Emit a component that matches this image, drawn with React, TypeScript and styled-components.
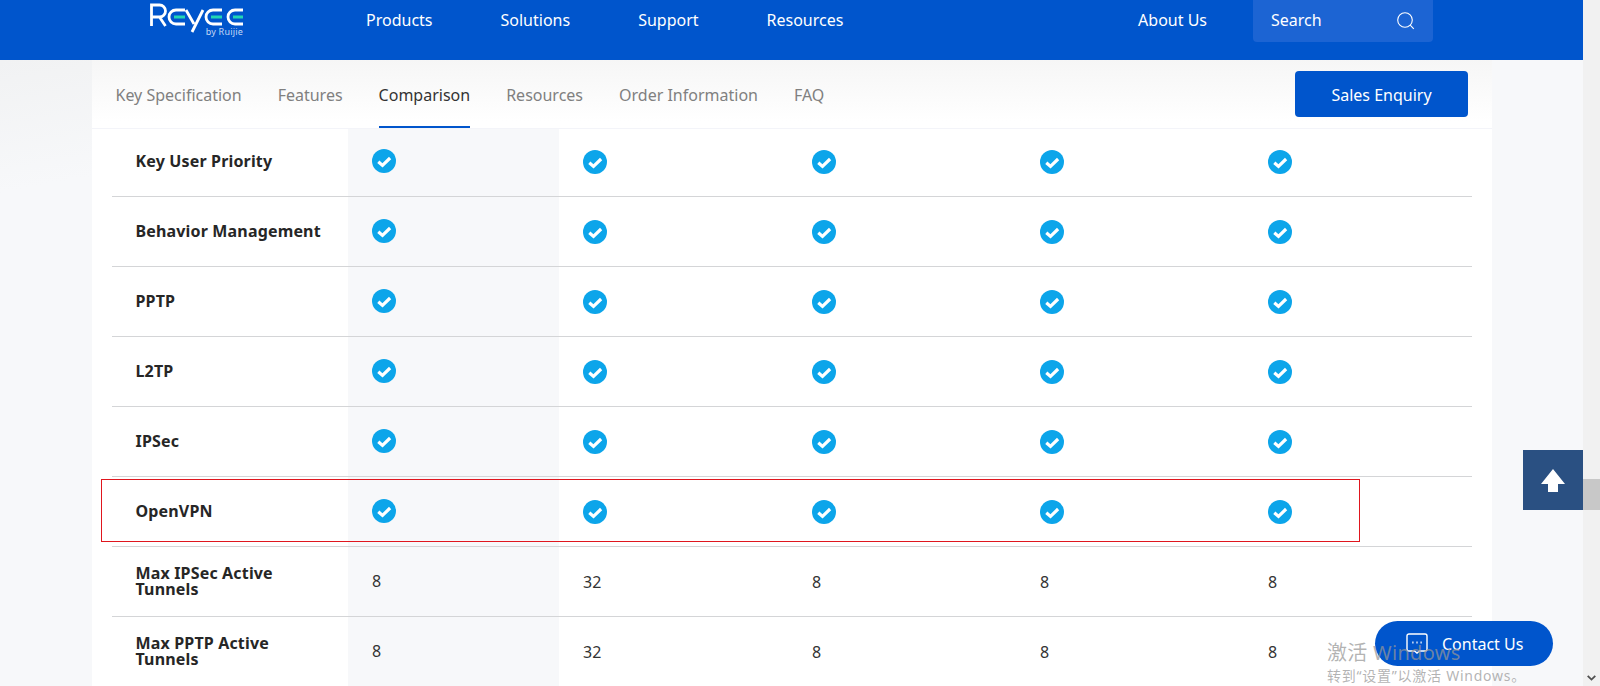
import React from 'react';
import styled, { createGlobalStyle } from 'styled-components';

const BLUE = '#0055cc';

const GlobalStyle = createGlobalStyle`
  html, body {
    margin: 0;
    padding: 0;
    height: 100%;
    overflow: hidden;
  }
  body {
    font-family: 'Noto Sans', 'Open Sans', sans-serif;
    color: #333;
  }
`;

const navItems = ['Products', 'Solutions', 'Support', 'Resources'];
const tabs = ['Key Specification', 'Features', 'Comparison', 'Resources', 'Order Information', 'FAQ'];

type Row = { label: string; values?: string[] };

const rows: Row[] = [
  { label: 'Key User Priority' },
  { label: 'Behavior Management' },
  { label: 'PPTP' },
  { label: 'L2TP' },
  { label: 'IPSec' },
  { label: 'OpenVPN' },
  { label: 'Max IPSec Active Tunnels', values: ['8', '32', '8', '8', '8'] },
  { label: 'Max PPTP Active Tunnels', values: ['8', '32', '8', '8', '8'] },
];

const CheckIcon = () => (
  <svg width="24" height="24" viewBox="0 0 24 24">
    <circle cx="12" cy="12" r="12" fill="#0ca5ea" />
    <path d="M6.300 12.700l4.200 3.700 7.600-7.400" fill="none" stroke="#fff" strokeWidth="3.200" />
  </svg>
);

const Logo = () => (
  <svg width="94" height="40" viewBox="0 0 94 40" role="img" aria-label="Reyee by Ruijie">
    <g fill="none" stroke="#fff" strokeWidth="2.800">
      <path d="M1.500 24V3H9.500a6 6 0 0 1 0 12H1.500M9.500 15l6 9" />
      <path d="M35 8H26a7 7 0 0 0 0 14h9" />
      <path d="M36 8l8 14M53 8L42 30" />
      <path d="M72 8H63a7 7 0 0 0 0 14h9" />
      <path d="M93 8H85a7 7 0 0 0 0 14h8" />
    </g>
    <g stroke="#22d6b4" strokeWidth="2.800">
      <path d="M24 15h11M61 15h11M83 15h10" />
    </g>
    <LogoSub x="93" y="33" textAnchor="end">by Ruijie</LogoSub>
  </svg>
);

const SearchIcon = () => (
  <svg width="18" height="18" viewBox="0 0 18 18" fill="none" stroke="#fff" strokeWidth="1.100">
    <circle cx="8" cy="8" r="7.300" />
    <path d="M13.200 13.200l3.600 3.600" />
  </svg>
);

const ArrowUp = () => (
  <svg width="24" height="23" viewBox="0 0 24 23">
    <polygon points="12,0 24,15 17,15 17,23 7,23 7,15 0,15" fill="#fff" />
  </svg>
);

const ChatIcon = () => (
  <svg width="22" height="21" viewBox="0 0 22 21" fill="none" stroke="#fff" strokeWidth="1.400">
    <path d="M3 1h16a2 2 0 0 1 2 2v13a2 2 0 0 1-2 2h-5.500l-2.500 2-2.500-2H3a2 2 0 0 1-2-2V3a2 2 0 0 1 2-2z" />
    <path d="M6.300 9.500h1.200M10.400 9.500h1.200M14.500 9.500h1.200" strokeWidth="1.800" />
  </svg>
);

const Chevron = () => (
  <svg width="9" height="6" viewBox="0 0 9 6" fill="none" stroke="#505050" strokeWidth="1.800">
    <path d="M.7.800l3.800 3.800L8.300.8" />
  </svg>
);

export default function App() {
  return (
    <Page>
      <GlobalStyle />
      <Main>
        <Header>
          <LogoSlot>
            <Logo />
          </LogoSlot>
          <Nav>
            {navItems.map((item) => (
              <NavLink key={item}>{item}</NavLink>
            ))}
          </Nav>
          <AboutLink>About Us</AboutLink>
          <SearchBox>
            <SearchLabel>Search</SearchLabel>
            <SearchIcon />
          </SearchBox>
        </Header>
        <Panel>
          <TabBar>
            <TabList>
              {tabs.map((t) => (
                <Tab key={t} $active={t === 'Comparison'}>
                  {t}
                </Tab>
              ))}
            </TabList>
            <SalesButton>Sales Enquiry</SalesButton>
          </TabBar>
          <Table>
            {rows.map((row, i) => (
              <TableRow key={row.label} $first={i === 0}>
                <LabelCell>{row.label}</LabelCell>
                {[0, 1, 2, 3, 4].map((c) => (
                  <ValueCell key={c} $shaded={c === 0}>
                    {row.values ? <ValueText>{row.values[c]}</ValueText> : <CheckIcon />}
                  </ValueCell>
                ))}
              </TableRow>
            ))}
            <Annotation />
          </Table>
        </Panel>
      </Main>
      <ScrollTrack>
        <ScrollThumb />
        <ScrollArrow>
          <Chevron />
        </ScrollArrow>
      </ScrollTrack>
      <BackToTop>
        <ArrowUp />
      </BackToTop>
      <ContactButton>
        <ChatIcon />
        <span>Contact Us</span>
      </ContactButton>
      <Watermark>
        <WatermarkTitle>激活 Windows</WatermarkTitle>
        <WatermarkSub>转到“设置”以激活 Windows。</WatermarkSub>
      </Watermark>
    </Page>
  );
}

const Page = styled.div`
  position: relative;
  display: flex;
  width: 1600px;
  height: 686px;
  overflow: hidden;
`;

const Main = styled.div`
  display: flex;
  flex-direction: column;
  width: 1583px;
  height: 686px;
  background: linear-gradient(170deg, #f1f2f3 60px, #f7f8fa 190px);
`;

const Header = styled.header`
  display: flex;
  align-items: flex-start;
  flex-shrink: 0;
  height: 60px;
  padding: 0 150px;
  background: ${BLUE};
  color: #fff;
  font-size: 16px;
`;

const LogoSlot = styled.div`
  width: 216px;
  padding-top: 2px;
`;

const LogoSub = styled.text`
  font-family: 'Noto Sans', sans-serif;
  font-size: 9px;
  letter-spacing: 0.2px;
  fill: #c3d7f5;
`;

const Nav = styled.nav`
  display: flex;
  gap: 68px;
`;

const NavLink = styled.a`
  line-height: 41px;
`;

const AboutLink = styled.a`
  margin-left: auto;
  margin-right: 46px;
  line-height: 41px;
`;

const SearchBox = styled.div`
  display: flex;
  align-items: center;
  justify-content: space-between;
  box-sizing: border-box;
  width: 180px;
  height: 42px;
  padding: 0 18px;
  border-radius: 0 0 4px 4px;
  background: #1c64d3;
`;

const SearchLabel = styled.span`
  margin-bottom: 2px;
`;

const Panel = styled.main`
  display: flex;
  flex-direction: column;
  flex: 1;
  width: 1400px;
  margin: 0 auto;
  background: #fff;
`;

const TabBar = styled.div`
  display: flex;
  justify-content: space-between;
  box-sizing: border-box;
  flex-shrink: 0;
  height: 69px;
  padding: 11px 24px 0;
  border-bottom: 1px solid #f3f4f9;
  background: linear-gradient(180deg, #f6f6f6 0%, #fff 90%);
`;

const TabList = styled.div`
  display: flex;
  gap: 36px;
`;

const Tab = styled.a<{ $active?: boolean }>`
  box-sizing: border-box;
  height: 57px;
  padding-top: 12px;
  border-bottom: 2px solid ${({ $active }) => ($active ? BLUE : 'transparent')};
  color: ${({ $active }) => ($active ? '#333' : '#808080')};
  font-size: 16px;
  line-height: 24px;
`;

const SalesButton = styled.button`
  width: 173px;
  height: 46px;
  padding: 2px 0 0 1px;
  border: 0;
  border-radius: 4px;
  background: ${BLUE};
  color: #fff;
  font-family: inherit;
  font-size: 16px;
`;

const Table = styled.div`
  position: relative;
  flex: 1;
  padding: 0 20px;
  overflow: hidden;
`;

const TableRow = styled.div<{ $first?: boolean }>`
  display: grid;
  grid-template-columns: 236px 211px 229px 228px 228px 1fr;
  box-sizing: border-box;
  height: ${({ $first }) => ($first ? 69 : 70)}px;
  margin-top: ${({ $first }) => ($first ? -1 : 0)}px;
  border-bottom: 1px solid #d4d5d7;
`;

const LabelCell = styled.div`
  display: flex;
  align-items: center;
  padding: 0 24px 2px;
  color: #262626;
  font-size: 16px;
  font-weight: 700;
  letter-spacing: 0.16px;
  line-height: 16px;
`;

const ValueCell = styled.div<{ $shaded?: boolean }>`
  display: flex;
  align-items: center;
  padding: ${({ $shaded }) => ($shaded ? '0 24px 2px' : '0 24px')};
  background: ${({ $shaded }) => ($shaded ? '#f7f8fa' : 'transparent')};
  color: #333;
  font-size: 16px;
`;

const ValueText = styled.span`
  margin-left: 0.5px;
`;

const Annotation = styled.div`
  position: absolute;
  left: 9px;
  top: 350px;
  width: 1259px;
  height: 63px;
  border: 1px solid #e0161e;
  box-sizing: border-box;
`;

const ScrollTrack = styled.div`
  position: relative;
  width: 17px;
  height: 686px;
  background: #f1f1f1;
`;

const ScrollThumb = styled.div`
  position: absolute;
  top: 479px;
  left: 0;
  width: 17px;
  height: 31px;
  background: #c8c8c8;
`;

const ScrollArrow = styled.div`
  position: absolute;
  bottom: 5px;
  left: 4px;
  display: flex;
`;

const BackToTop = styled.div`
  position: absolute;
  top: 450px;
  left: 1523px;
  display: flex;
  align-items: center;
  justify-content: center;
  width: 60px;
  height: 60px;
  background: #2a5082;
`;

const ContactButton = styled.div`
  position: absolute;
  top: 621px;
  left: 1375px;
  display: flex;
  align-items: center;
  gap: 14px;
  box-sizing: border-box;
  width: 178px;
  height: 45px;
  padding-left: 31px;
  border-radius: 23px;
  background: ${BLUE};
  color: #fff;
  font-size: 16px;
`;

const Watermark = styled.div`
  position: absolute;
  top: 639px;
  left: 1327px;
  color: rgba(150, 150, 150, 0.72);
  font-family: 'Noto Sans', 'Noto Sans CJK SC', sans-serif;
  white-space: nowrap;
  pointer-events: none;
`;

const WatermarkTitle = styled.div`
  font-size: 20px;
  letter-spacing: 0.3px;
  line-height: 27px;
`;

const WatermarkSub = styled.div`
  font-size: 14px;
  letter-spacing: 0.75px;
  line-height: 20px;
`;
